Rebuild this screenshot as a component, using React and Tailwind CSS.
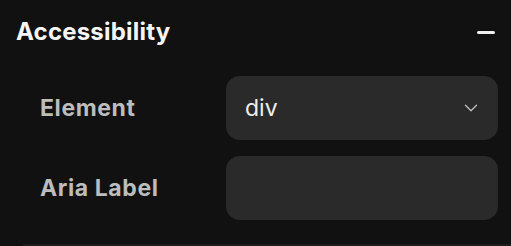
import React, { useState } from 'react';
import { ChevronDown } from 'lucide-react';

export default function App() {
    const [element, setElement] = useState("div");
    const [ariaLabel, setAriaLabel] = useState("");

    return (
        <div className="w-[511px] h-[246px] bg-[#111111] overflow-hidden flex flex-col" style={{ fontFamily: 'Inter, "Noto Sans", sans-serif' }}>
            {/* Header */}
            <div className="flex items-center justify-between pl-4 pr-4 pt-4 h-[48px]">
                <h2 className="text-[24px] font-bold tracking-[0.2px] text-[#f5f5f5]">Accessibility</h2>
                <button className="w-[18px] h-[3px] bg-[#f0f0f0] rounded-sm" aria-label="Collapse" />
            </div>

            {/* Fields */}
            <div className="flex flex-col gap-4 pl-10 pr-[13px] mt-[28px]">
                <div className="flex items-center">
                    <label className="w-[186px] shrink-0 text-[23px] font-bold tracking-[0.6px] text-[#bdbdbd]">Element</label>
                    <div className="flex-1 h-[64px] bg-[#2a2a2a] rounded-[14px] flex items-center pl-[19px] pr-[16px]">
                        <span className="flex-1 text-[23px] text-[#eeeeee]">{element}</span>
                        <ChevronDown size={22} strokeWidth={1.5} className="text-[#bcbcbc]" />
                    </div>
                </div>
                <div className="flex items-center">
                    <label className="w-[186px] shrink-0 text-[23px] font-bold tracking-[0.6px] text-[#bdbdbd]">Aria Label</label>
                    <input
                        type="text"
                        value={ariaLabel}
                        onChange={(e) => setAriaLabel(e.target.value)}
                        className="flex-1 min-w-0 h-[64px] bg-[#2a2a2a] rounded-[14px] px-5 text-[23px] text-[#eeeeee] outline-none"
                    />
                </div>
            </div>

            <div className="mt-auto ml-[23px] h-[2px] bg-[#1c1c1c]" />
        </div>
    );
}
